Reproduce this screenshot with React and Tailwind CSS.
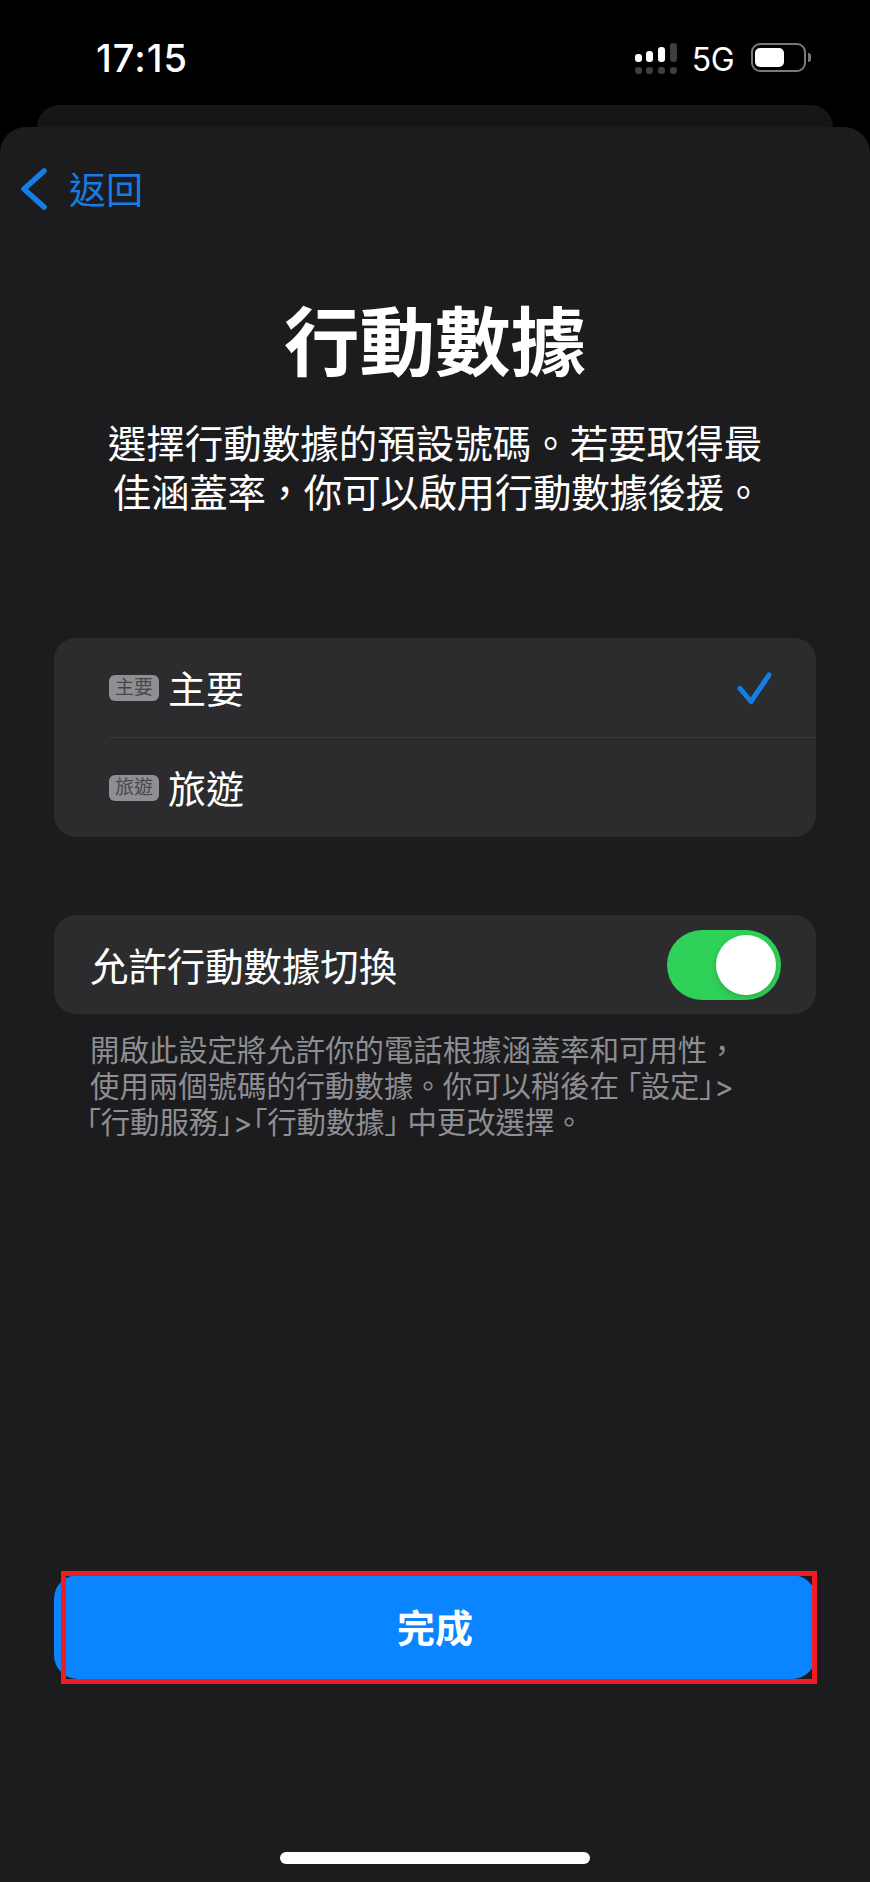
const FONT = "font-['Inter','Noto_Sans_CJK_TC',sans-serif]";

const StatusBar = () => (
  <div className="h-[105px] relative">
    <div className="flex items-start pt-[36px] pl-[96px] pr-[59px]">
      <span className="text-[38px] leading-[44px] font-medium text-white tracking-[1px]">17:15</span>
      <div className="ml-auto flex items-start">
        <Signal />
        <span className="ml-[14px] mt-[5px] text-[32px] leading-[38px] text-white tracking-[-0.5px]">5G</span>
        <Battery />
      </div>
    </div>
  </div>
);

const Signal = () => (
  <svg width="44" height="38" viewBox="0 0 44 38" className="mt-[3px]">
    <rect x="1" y="15" width="7" height="8" rx="3" fill="#fff" />
    <rect x="12" y="12" width="7" height="11" rx="3" fill="#fff" />
    <rect x="24" y="8" width="7" height="15" rx="3" fill="#fff" />
    <rect x="36" y="4" width="7" height="19" rx="3" fill="#3f3f3f" />
    <rect x="1" y="28" width="7" height="7" rx="3" fill="#3f3f3f" />
    <rect x="12" y="28" width="7" height="7" rx="3" fill="#3f3f3f" />
    <rect x="24" y="28" width="7" height="7" rx="3" fill="#3f3f3f" />
    <rect x="36" y="28" width="7" height="7" rx="3" fill="#3f3f3f" />
  </svg>
);

const Battery = () => (
  <div className="ml-[17px] mt-[7px] flex items-center">
    <div className="w-[55px] h-[29px] border-2 border-[#7a7a7a] rounded-[9px] py-[3px] pl-[2px]">
      <div className="w-[29px] h-full bg-white rounded-[5px]" />
    </div>
    <div className="ml-[2px] w-[3px] h-[9px] bg-[#7a7a7a] rounded-r-full" />
  </div>
);

const Badge = ({ label }) => (
  <span className="w-[50px] h-[26px] rounded-[6px] bg-[#8e8e93] text-[#48484a] text-[19px] leading-[26px] text-center shrink-0">
    {label}
  </span>
);

const SimRow = ({ label, checked }) => (
  <div className="h-[99px] flex items-center">
    <Badge label={label} />
    <span className="ml-[9px] pt-[3px] text-[38px] leading-[44px] text-white">{label}</span>
    {checked && (
      <svg width="40" height="40" viewBox="0 0 40 40" className="ml-auto mr-[41px]" fill="none">
        <path d="M5 20.5 L16 33.5 L34 7" stroke="#147ee6" strokeWidth="5" strokeLinecap="round" strokeLinejoin="round" />
      </svg>
    )}
  </div>
);

// corner brackets sit tight in the original, palt narrows them
const Q = ({ children, className = "" }) => (
  <span className={`[font-feature-settings:'palt'] ${className}`}>{children}</span>
);

export default function App() {
  return (
    <div className={`w-[870px] h-[1882px] bg-black overflow-hidden ${FONT}`}>
      <StatusBar />

      <div className="mx-[37px] h-[40px] bg-[#161618] rounded-t-[22px]" />

      <div className="relative -mt-[18px] h-[1755px] bg-[#1c1c1e] rounded-t-[26px]">
        <div className="pt-[41px] flex items-center h-[83px] pl-[21px]">
          <svg width="26" height="42" viewBox="0 0 26 42" fill="none">
            <path d="M23 3 L3 21 L23 39" stroke="#147ee6" strokeWidth="5.5" strokeLinecap="round" strokeLinejoin="round" />
          </svg>
          <span className="ml-[22px] pt-[4px] text-[37px] leading-[44px] text-[#147ee6]">返回</span>
        </div>

        <h1 className="mt-[88px] text-center text-[75.5px] leading-[90px] font-bold text-white">行動數據</h1>
        <p className="mt-[32px] text-center text-[38.5px] leading-[49px] text-white">
          選擇行動數據的預設號碼。若要取得最
          <br />
          <span className="inline-block pl-[5px] tracking-[-0.3px]">佳涵蓋率，你可以啟用行動數據後援。</span>
        </p>

        <div className="mt-[120px] mx-[54px] rounded-[22px] bg-[#2c2c2e] pl-[55px]">
          <SimRow label="主要" checked />
          <div className="h-px bg-[#3a3a3c]" />
          <SimRow label="旅遊" />
        </div>

        <div className="mt-[78px] mx-[54px] h-[99px] rounded-[22px] bg-[#2c2c2e] flex items-center pl-[36px] pr-[35px]">
          <span className="pt-[4px] text-[38.4px] leading-[46px] text-white">允許行動數據切換</span>
          <div className="ml-auto w-[114px] h-[70px] rounded-full bg-[#30d158] flex items-center justify-end pr-[5px]">
            <div className="w-[60px] h-[60px] rounded-full bg-white shadow-[0_2px_6px_rgba(0,0,0,0.18)]" />
          </div>
        </div>

        <p className="mt-[19px] ml-[90px] w-[660px] text-[29.4px] leading-[36px] text-[#8e8e93] whitespace-nowrap">
          開啟此設定將允許你的電話根據涵蓋率和可用性，
          <br />
          使用兩個號碼的行動數據。你可以稍後在<Q className="ml-[7px]">「設定」</Q>&gt;
          <br />
          <span className="-ml-[4px]"><Q>「</Q>行動服務<Q>」</Q>&gt;<Q>「</Q>行動數據<Q className="mr-[8px]">」</Q>中更改選擇。</span>
        </p>

        <div className="relative mt-[434px] mx-[54px] h-[104px] rounded-[24px] bg-[#0a84ff] flex items-center justify-center">
          <span className="pt-[2px] text-[38px] leading-[44px] font-bold text-white">完成</span>
          <div className="absolute left-[7px] -top-[4px] w-[756px] h-[113px] border-[5px] border-[#f01c24]" />
        </div>

        <div className="mt-[173px] mx-auto w-[310px] h-[12px] rounded-full bg-white" />
      </div>
    </div>
  );
}
